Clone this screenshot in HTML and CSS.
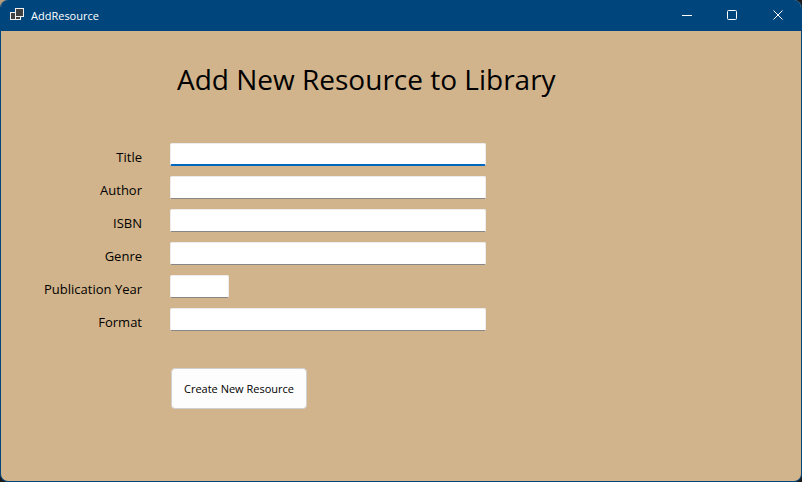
FILE: index.html
```
<!DOCTYPE html>
<html lang="en">
<head>
<meta charset="utf-8">
<title>AddResource</title>
<link rel="stylesheet" href="styles.css">
</head>
<body>
<div class="window">
  <header class="titlebar">
    <svg class="app-icon" width="16" height="17" viewBox="0 0 16 17" aria-hidden="true">
      <g fill="#3f3f3f" stroke="#f0f0f0" stroke-width="1">
        <rect x="2.500" y="5.500" width="5" height="7"/>
        <rect x="7.500" y="9.500" width="5" height="3"/>
        <rect x="7.500" y="1.500" width="8" height="8"/>
      </g>
    </svg>
    <span class="caption">AddResource</span>
    <div class="controls">
      <button type="button" class="control" aria-label="Minimize"><svg width="12" height="13" viewBox="0 0 12 13"><path d="M2 6.500H12"/></svg></button>
      <button type="button" class="control" aria-label="Maximize"><svg width="12" height="13" viewBox="0 0 12 13"><rect x="1.500" y="1.500" width="9" height="9" rx="1"/></svg></button>
      <button type="button" class="control" aria-label="Close"><svg width="12" height="13" viewBox="0 0 12 13"><path d="M1.500 1.500L10.500 10.500M10.500 1.500L1.500 10.500"/></svg></button>
    </div>
  </header>
  <main class="content">
    <h1>Add New Resource to Library</h1>
    <form class="form">
      <label for="title">Title</label><input id="title" class="active" type="text">
      <label for="author">Author</label><input id="author" type="text">
      <label for="isbn">ISBN</label><input id="isbn" type="text">
      <label for="genre">Genre</label><input id="genre" type="text">
      <label for="year">Publication Year</label><input id="year" class="short" type="text">
      <label for="format">Format</label><input id="format" type="text">
      <button type="button" class="submit">Create New Resource</button>
    </form>
  </main>
</div>
</body>
</html>
```
FILE: styles.css
```
* {
  box-sizing: border-box;
}

body {
  margin: 0;
  background: linear-gradient(135deg, #b89f7e 0 8px, #1b1b1b 8px);
  font-family: "Segoe UI", "Open Sans", "Noto Sans", sans-serif;
  color: #000;
}

.window {
  display: flex;
  flex-direction: column;
  min-height: 100vh;
  border: 1px solid #00457c;
  border-top: 0;
  border-radius: 8px;
  background: #d2b48c;
  overflow: hidden;
}

.titlebar {
  display: flex;
  align-items: center;
  height: 31px;
  padding-left: 7px;
  background: #00457c;
  color: #fff;
}

.caption {
  margin-left: 7px;
  font-size: 11px;
  line-height: 17px;
}

.controls {
  display: flex;
  margin-left: auto;
}

.control {
  display: grid;
  place-items: center;
  width: 46px;
  height: 31px;
  padding: 0;
  border: 0;
  background: none;
}

.control svg {
  fill: none;
  stroke: #fff;
}

.content {
  padding: 25px 24px;
}

h1 {
  margin: 0 0 41px 152px;
  font-size: 28px;
  font-weight: 400;
  line-height: 46px;
}

.form {
  display: grid;
  grid-template-columns: 117px minmax(0, 316px);
  column-gap: 28px;
  row-gap: 10px;
}

label {
  padding-top: 5px;
  font-size: 13px;
  line-height: 18px;
  text-align: right;
  white-space: nowrap;
}

input {
  width: 100%;
  height: 23px;
  padding: 0 4px;
  border: 1px solid #ececec;
  border-bottom-color: #868686;
  border-radius: 2px;
  background: #fff;
  font: inherit;
  font-size: 12px;
  outline: 0;
}

.active {
  border-bottom: 2px solid #0067c0;
}

.short {
  width: 59px;
}

.submit {
  grid-column: 2;
  justify-self: start;
  width: 136px;
  height: 41px;
  margin: 27px 0 0 1px;
  padding: 0;
  border: 1px solid #d0d0d0;
  border-radius: 4px;
  background: #fdfdfd;
  font: inherit;
  font-size: 11px;
}
```
